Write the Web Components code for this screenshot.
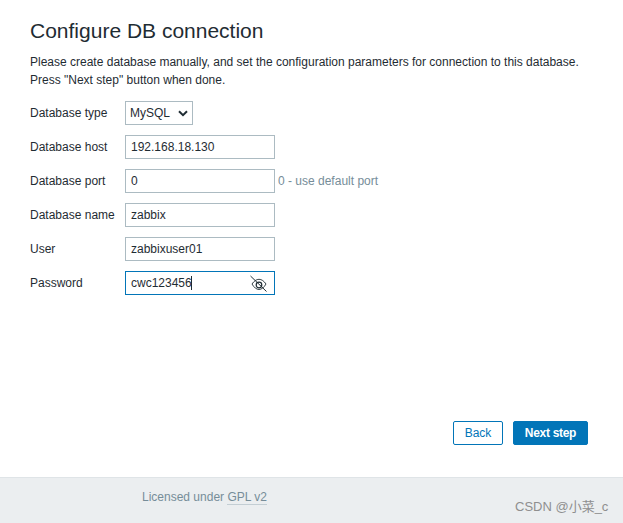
<!DOCTYPE html>
<html lang="en"><head><meta charset="utf-8"><title>Configure DB connection</title>
<style>html,body{margin:0;height:100%;background:#fff}body{font:12px "Liberation Sans",Arial,sans-serif;color:#1f2c33}</style></head>
<body>
<setup-page>
  <setup-row label="Database type"><db-select value="MySQL"></db-select></setup-row>
  <setup-row label="Database host"><db-input value="192.168.18.130"></db-input></setup-row>
  <setup-row label="Database port" hint="0 - use default port"><db-input value="0"></db-input></setup-row>
  <setup-row label="Database name"><db-input value="zabbix"></db-input></setup-row>
  <setup-row label="User"><db-input value="zabbixuser01"></db-input></setup-row>
  <setup-row label="Password"><db-input value="cwc123456" focused eye></db-input></setup-row>
</setup-page>
<script>
function def(name, html, init){
  customElements.define(name, class extends HTMLElement{
    connectedCallback(){
      if(this.shadowRoot) return;
      const r=this.attachShadow({mode:'open'});
      r.innerHTML=html;
      if(init) init.call(this,r);
    }
  });
}
def('setup-page',`<style>
:host{display:flex;flex-direction:column;height:523px;overflow:hidden;position:relative;font:12px "Liberation Sans",Arial,sans-serif;color:#1f2c33}
main{flex:1;display:flex;flex-direction:column;padding:18px 35px 32px 30px;min-height:0}
h1{margin:0;font-size:21px;font-weight:400;line-height:26px;color:#1f2c33}
p{margin:9px 0 0;line-height:18px;white-space:nowrap}
.form{display:flex;flex-direction:column;gap:10px;margin-top:12px;flex:1}
.actions{display:flex;justify-content:flex-end;gap:10px}
button{font:12px "Liberation Sans",Arial,sans-serif;height:24px;border-radius:2px;padding:0;box-sizing:border-box;border:1px solid #0275b8}
.back{width:50px;background:#fff;color:#0275b8}
.next{width:75px;background:#0275b8;color:#fff;font-weight:700;letter-spacing:-.3px}
footer{height:46px;box-sizing:border-box;flex:none;background:#ebeef0;border-top:1px solid #dfe4e7;padding:11px 0 0 142px;color:#768d99;line-height:16px}
footer a{color:#768d99;text-decoration:none;border-bottom:1px solid #c3ced4}
.mark{position:absolute;left:515px;top:498px;color:#8f8f8f;font:13px "Liberation Sans","Noto Sans CJK SC",sans-serif;line-height:18px}
</style>
<main>
<h1>Configure DB connection</h1>
<p>Please create database manually, and set the configuration parameters for connection to this database.<br>Press "Next step" button when done.</p>
<div class="form"><slot></slot></div>
<div class="actions"><button class="back">Back</button><button class="next">Next step</button></div>
</main>
<footer>Licensed under <a>GPL v2</a></footer>
<span class="mark">CSDN @小菜_c</span>`);
def('setup-row',`<style>
:host{display:flex;align-items:center;height:24px}
.l{width:95px;flex:none}
.h{margin-left:3px;color:#768d99}
</style><span class="l"></span><slot></slot><span class="h"></span>`,function(r){
  r.querySelector('.l').textContent=this.getAttribute('label');
  r.querySelector('.h').textContent=this.getAttribute('hint')||'';
});
def('db-input',`<style>
:host{display:block;width:150px;height:24px;box-sizing:border-box;border:1px solid #acbbc2;background:#fff;position:relative;padding:0 5px;line-height:22px;white-space:nowrap}
:host([focused]){border-color:#0275b8}
.c{display:inline-block;width:1px;height:14px;margin-left:-1px;background:#1f2c33;vertical-align:-3px}
svg{position:absolute;left:123px;top:1px}
</style><span class="v"></span>`,function(r){
  r.querySelector('.v').textContent=this.getAttribute('value');
  if(this.hasAttribute('focused')) r.querySelector('.v').insertAdjacentHTML('afterend','<span class="c"></span>');
  if(this.hasAttribute('eye')) r.innerHTML+=`<svg width="20" height="20" viewBox="0 0 20 20" fill="none" stroke="#1f2c33"><path d="M3 11C5 8 7.500 6.300 10 6.300s5 1.700 7 4.700C15 14.500 12.500 16.500 10 16.500S5 14.500 3 11Z" stroke-width=".9"/><circle cx="10" cy="12" r="2.800" stroke-width="1.200"/><path d="M1.500 3L17.500 18.500" stroke-width="1"/></svg>`;
});
def('db-select',`<style>
:host{display:flex;align-items:center;width:68px;height:24px;box-sizing:border-box;border:1px solid #acbbc2;background:#fff;padding-left:4px;position:relative}
svg{position:absolute;left:52px;top:8px}
</style><span class="v"></span><svg width="10" height="7" viewBox="0 0 10 7" fill="none" stroke="#1f2c33" stroke-width="2"><path d="M1 1.300L5 5.200L9 1.300"/></svg>`,function(r){
  r.querySelector('.v').textContent=this.getAttribute('value');
});
</script>
</body></html>
